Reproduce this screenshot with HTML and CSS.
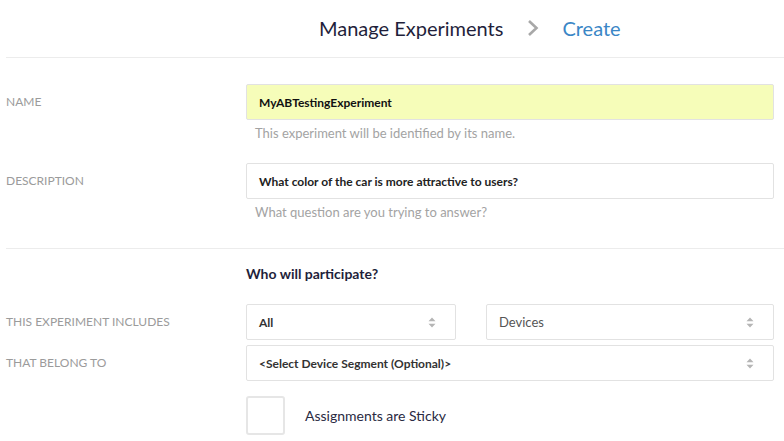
FILE: index.html
```html
<!DOCTYPE html>
<html>
<head>
<meta charset="utf-8">
<link rel="stylesheet" href="styles.css">
</head>
<body>
<div class="page">
  <div class="header">
    <span class="crumb">Manage Experiments</span>
    <svg class="chev" width="12" height="18" viewBox="0 0 12 18"><polyline points="2,2 9.5,9 2,16" fill="none" stroke="#a8a8a8" stroke-width="2.6"/></svg>
    <span class="crumb current">Create</span>
  </div>

  <div class="section first">
    <div class="row">
      <div class="label">Name</div>
      <div class="field">
        <div class="input highlight">MyABTestingExperiment</div>
        <div class="help">This experiment will be identified by its name.</div>
      </div>
    </div>
    <div class="row">
      <div class="label">Description</div>
      <div class="field">
        <div class="input">What color of the car is more attractive to users?</div>
        <div class="help">What question are you trying to answer?</div>
      </div>
    </div>
  </div>

  <div class="section second">
    <div class="row">
      <div></div>
      <div class="subtitle">Who will participate?</div>
    </div>
    <div class="row sel-row">
      <div class="label">This experiment includes</div>
      <div class="pair">
        <div class="select small"><span>All</span><svg class="arr" width="8" height="11" viewBox="0 0 8 11"><path d="M4 0.5 L7.5 4.3 H0.5 Z M4 10.5 L7.5 6.7 H0.5 Z" fill="#b5b5b5"/></svg></div>
        <div class="select wide"><span class="light">Devices</span><svg class="arr" width="8" height="11" viewBox="0 0 8 11"><path d="M4 0.5 L7.5 4.3 H0.5 Z M4 10.5 L7.5 6.7 H0.5 Z" fill="#b5b5b5"/></svg></div>
      </div>
    </div>
    <div class="row sel-row">
      <div class="label">That belong to</div>
      <div class="select"><span>&lt;Select Device Segment (Optional)&gt;</span><svg class="arr" width="8" height="11" viewBox="0 0 8 11"><path d="M4 0.5 L7.5 4.3 H0.5 Z M4 10.5 L7.5 6.7 H0.5 Z" fill="#b5b5b5"/></svg></div>
    </div>
    <div class="row check-row">
      <div></div>
      <label class="check"><span class="box"></span><span class="check-text">Assignments are Sticky</span></label>
    </div>
  </div>
</div>
</body>
</html>
```

FILE: styles.css
```css
* { box-sizing: border-box; }
html, body { margin: 0; padding: 0; background: #fff; }
body {
  font-family: Lato, "Open Sans", "Liberation Sans", sans-serif;
  color: #333;
  overflow: hidden;
}
.page {
  padding: 0 0 0 6px;
}
.header {
  height: 58px;
  border-bottom: 1px solid #ececec;
  display: flex;
  align-items: center;
  padding-left: 313px;
  padding-bottom: 1px;
}
.crumb {
  font-size: 20px;
  color: #1f1f3b;
}
.crumb.current { color: #3a86c6; }
.chev { margin: 0 23px 0 24px; }

.section.first { padding-top: 26px; border-bottom: 1px solid #ececec; padding-bottom: 28px; }
.section.second { padding-top: 15px; padding-right: 10px; }
.section.first .row { padding-right: 10px; }

.row {
  display: grid;
  grid-template-columns: 240px 1fr;
}
.row + .row { margin-top: 22px; }
.label {
  font-size: 12px;
  text-transform: uppercase;
  color: #9b9b9b;
  line-height: 36px;
  height: 36px;
}
.input {
  height: 36px;
  border: 1px solid #e2e2e2;
  border-radius: 2px;
  padding: 0 12px;
  font-size: 12px;
  font-weight: 700;
  color: #222;
  display: flex;
  align-items: center;
  background: #fff;
}
.input.highlight { background: #f6fdb9; color: #111; }
.help {
  margin-top: 5px;
  padding-left: 9px;
  font-size: 13px;
  line-height: 16px;
  color: #a3a3a3;
}
.subtitle {
  font-size: 14px;
  font-weight: 700;
  color: #1f1f3b;
  line-height: 20px;
}
.row.sel-row { margin-top: 20px; }
.row.sel-row + .row.sel-row { margin-top: 5px; }
.pair {
  display: flex;
  gap: 30px;
}
.select {
  height: 36px;
  border: 1px solid #e2e2e2;
  border-radius: 2px;
  padding: 0 19px 0 12px;
  font-size: 12px;
  font-weight: 700;
  color: #333;
  display: flex;
  align-items: center;
  justify-content: space-between;
}
.select.small { width: 210px; }
.select.wide { flex: 1; }
.select .light { font-weight: 400; font-size: 13px; color: #555; }
.arr { display: block; }
.row.check-row { margin-top: 15px; }
.check {
  display: flex;
  align-items: center;
}
.box {
  width: 39px;
  height: 39px;
  border: 2px solid #e6e6e6;
  border-radius: 3px;
  margin-right: 20px;
}
.check-text {
  font-size: 14px;
  color: #2a2a42;
}
```
